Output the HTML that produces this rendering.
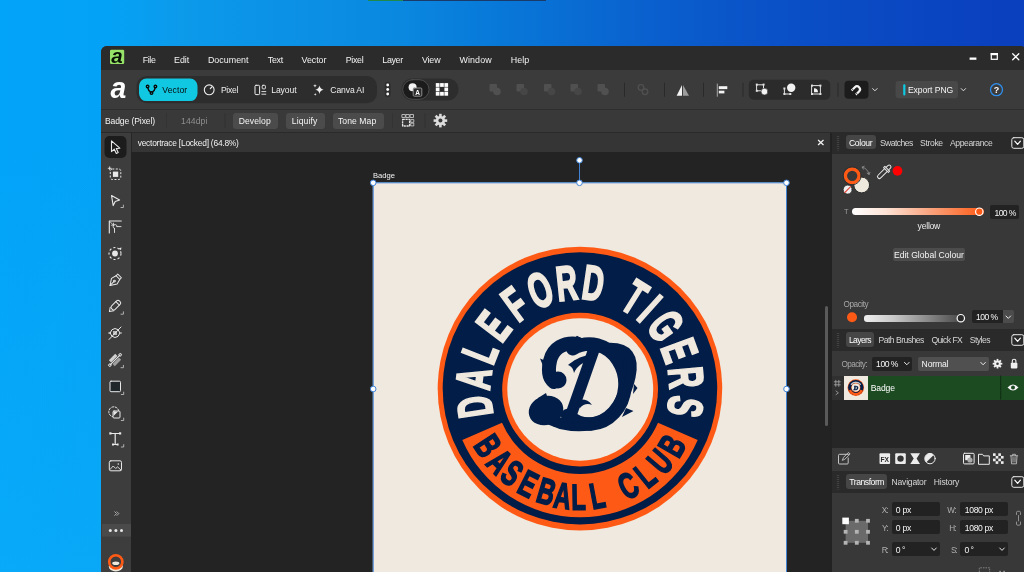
<!DOCTYPE html>
<html><head><meta charset="utf-8"><title>vectortrace</title>
<style>
*{box-sizing:border-box;margin:0;padding:0}
html,body{width:1024px;height:572px;overflow:hidden}
body{position:relative;font-family:"Liberation Sans",sans-serif;font-size:9px;color:#e6e6e6;
background:linear-gradient(180deg,rgba(30,190,250,0) 0px,rgba(30,190,250,0) 150px,rgba(30,190,250,0.22) 572px),linear-gradient(90deg,#02a4f9 0px,#04a2f6 110px,#0c9aeb 180px,#0a88e0 400px,#0878d8 500px,#0a60ce 650px,#0a50c6 780px,#0a40be 1000px);}
.abs{position:absolute}
#win{position:absolute;left:101px;top:46px;width:926.6px;height:540px;background:#383838;border-radius:6px 8px 0 0;overflow:hidden}
#menubar{position:absolute;left:0;top:0;width:100%;height:24px;background:#2b2b2b}
#menubar span{position:absolute;top:9px;font-size:8.9px;color:#f0f0f0;white-space:nowrap}
#toolbar{position:absolute;left:0;top:24px;width:100%;height:40px;background:#3b3b3b;border-bottom:1px solid #2e2e2e}
#ctx{position:absolute;left:0;top:64px;width:100%;height:22px;background:#393939}
#ctxline{position:absolute;left:0;top:86px;width:100%;height:1px;background:#2a2a2a}
#tools{position:absolute;left:0;top:87px;width:30px;height:460px;background:#3d3d3d}
#doctab{position:absolute;left:31px;top:87px;width:698px;height:19px;background:#353535}
#canvas{position:absolute;left:30px;top:106px;width:701px;height:440px;background:#232323;overflow:hidden}
#gap{position:absolute;left:729px;top:87px;width:2px;height:460px;background:#222}
#panel{position:absolute;left:731px;top:87px;width:200px;height:460px;background:#383838}
.btn{position:absolute;background:#4a4a4a;border-radius:3px;color:#f2f2f2;text-align:center;white-space:nowrap}
.t{position:absolute;white-space:nowrap}
#txt,#panel,svg{will-change:transform}
.ic{position:absolute;overflow:visible}
.hdr{position:absolute;left:0;width:200px;background:#2b2b2b}
.tabsel{position:absolute;background:#464646;border-radius:3px}
.fld{position:absolute;background:#222;border-radius:2px;color:#f4f4f4;white-space:nowrap}
</style></head><body>
<div class="abs" style="left:368px;top:0;width:35px;height:1px;background:#1f8a4c"></div>
<div class="abs" style="left:403px;top:0;width:143px;height:1px;background:#1a3a6a"></div>
<div id="win">
 <div id="menubar"></div>
 <div id="toolbar"></div>
 <div id="ctx"></div>
 <div id="ctxline"></div>
 <div id="tools"></div>
 <div class="abs" style="left:30px;top:87px;width:1px;height:460px;background:#262626"></div>
 <div id="doctab"></div>
 <div id="canvas">
<svg class="abs" style="left:-131px;top:-152px" width="1024" height="572" viewBox="0 0 1024 572">
 <rect x="372.800" y="182.400" width="413.400" height="400" fill="#f0e9df"/>
 <ellipse cx="579.95" cy="388.7" rx="142.25" ry="141.9" fill="#fe5a15"/>
 <ellipse cx="579.95" cy="388.4" rx="137.25" ry="136.05" fill="#021d47"/>
 <ellipse cx="580.1" cy="389.6" rx="77.9" ry="76.9" fill="#fe5a15"/>
 <ellipse cx="580.25" cy="389.45" rx="72.95" ry="71.25" fill="#f0e9df"/>
 <path d="M462.3,439.9 A128.2,128.2 0 0 0 697.7,439.9 L658.0,422.8 A85,85 0 0 1 502.0,422.8 Z" fill="#fe5a15"/>
 <defs><path id="arcT" d="M502.2,433.9 A89.8,89.8 0 1 1 657.8,433.9"/><path id="arcB" d="M460.5,405.8 A120.7,120.7 0 0 0 699.5,405.8"/></defs>
 <text id="txT" font-family="Liberation Sans, sans-serif" font-weight="bold" font-size="48.8" fill="#f0e9df" stroke="#f0e9df" stroke-width="2.2" letter-spacing="7" textLength="336.2" lengthAdjust="spacingAndGlyphs"><textPath href="#arcT" textLength="336.2" lengthAdjust="spacingAndGlyphs"><tspan dx="21.10 -2.41 -1.01 3.22 5.31 -0.53 -4.82 -4.63 1.01 1.01 -2.26 0.24 -2.20 -1.57 0.24">DALEFORD TIGERS</tspan></textPath></text>
 <text id="txB" font-family="Liberation Sans, sans-serif" font-weight="bold" font-size="36.200" fill="#021d47" stroke="#021d47" stroke-width="1.7" letter-spacing="9" textLength="267.9" lengthAdjust="spacingAndGlyphs"><textPath href="#arcB" textLength="267.9" lengthAdjust="spacingAndGlyphs"><tspan dx="41.52 -1.49 -5.31 -0.13 -0.49 -6.88 -5.63 1.00 1.84 1.84 1.18 1.18 -1.79">BASEBALL CLUB</tspan></textPath></text>
 <g fill="none" stroke="#021d47" stroke-linecap="round" stroke-linejoin="round">
  <path d="M572.8,348.7 A35.5,40 0 1 1 567.6,415.5" stroke-width="13.500"/>
  <path d="M578,344 C564,342 553,348 550,361 C548,370 549,378 554,382" stroke-width="14"/>
  <path d="M545,416 C556,424 572,427 590,425" stroke-width="11"/>
 </g>
 <g fill="#021d47">
  <ellipse cx="546" cy="410.500" rx="17.500" ry="14.500" transform="rotate(-18 546 410.500)"/>
  <circle cx="558" cy="380" r="8.500"/>
  <path d="M589,361 C583,362 577,366 574,373 C573,368 571,366 568,365 C573,361 580,356 590,355 Z"/>
  <path d="M574,402 C580,398 588,399 592,405 C588,403 583,404 580,408 Z"/>
  <path d="M573,339.500 L577,335.800 L583,339 Z M631,364 L636,360 L634.500,371 Z M626,408 L633.500,411 L622,417 Z M546,361 L540,358.500 L543.500,367 Z M538,398 L546,393 L548,399 Z M634,384 L637.500,388 L633,394 Z"/>
 </g>
 <text x="0" y="0" transform="translate(556,425) skewX(-12) scale(0.800,1.020)" font-family="Liberation Serif, serif" font-weight="normal" font-style="italic" font-size="120" fill="#021d47" stroke="#021d47" stroke-width="4" stroke-linejoin="round">D</text>
 <rect x="373.200" y="182.800" width="413.300" height="400" fill="none" stroke="#3f82d6" stroke-width="1"/>
 <line x1="579.5" y1="160" x2="579.5" y2="183" stroke="#3f82d6" stroke-width="1"/>
 <g fill="#fff" stroke="#3f82d6" stroke-width="1">
  <circle cx="373.200" cy="182.800" r="2.800"/><circle cx="579.500" cy="182.800" r="2.800"/><circle cx="786.500" cy="182.800" r="2.800"/>
  <circle cx="579.500" cy="160.300" r="2.800"/><circle cx="373.200" cy="389" r="2.800"/><circle cx="786.500" cy="389" r="2.800"/>
 </g>
 <text x="373" y="177.700" font-family="Liberation Sans, sans-serif" font-size="7.600" fill="#f2f2f2">Badge</text>
</svg>
 </div>
 <div id="gap"></div>
 <div id="panel">
<div class="abs" style="left:0.0px;top:-0.5px;width:200.0px;height:21.0px;background:#2a2a2a;"></div>
<div class="abs" style="left:0.0px;top:195.8px;width:200.0px;height:21.8px;background:#2a2a2a;"></div>
<div class="abs" style="left:0.0px;top:338.3px;width:200.0px;height:21.7px;background:#2a2a2a;"></div>
<div class="abs" style="left:13.5px;top:1.8px;width:30.4px;height:14.7px;background:#464646;border-radius:3px"></div>
<span class="t" style="left:17.00px;top:5.62px;font-size:8.6px;line-height:1;letter-spacing:-0.339px;color:#ffffff;">Colour</span>
<span class="t" style="left:47.90px;top:5.62px;font-size:8.6px;line-height:1;letter-spacing:-0.548px;color:#d6d6d6;">Swatches</span>
<span class="t" style="left:88.00px;top:5.62px;font-size:8.6px;line-height:1;letter-spacing:-0.343px;color:#d6d6d6;">Stroke</span>
<span class="t" style="left:118.00px;top:5.62px;font-size:8.6px;line-height:1;letter-spacing:-0.398px;color:#d6d6d6;">Appearance</span>
<span class="t" style="left:12.00px;top:75.45px;font-size:7.5px;line-height:1;letter-spacing:-0.981px;color:#9a9a9a;">T</span>
<div class="abs" style="left:19.7px;top:75.2px;width:132.0px;height:7.0px;background:linear-gradient(90deg,#ffffff 0%,#fde3d6 25%,#f9a27c 60%,#fe5a15 100%);border-radius:3.5px"></div>
<div class="abs" style="left:158.0px;top:72.4px;width:29.2px;height:13.5px;background:#222;border-radius:2px"></div>
<span class="t" style="left:162.50px;top:75.72px;font-size:8.6px;line-height:1;letter-spacing:-0.637px;color:#f6f6f6;">100 %</span>
<span class="t" style="left:85.60px;top:89.02px;font-size:8.6px;line-height:1;letter-spacing:-0.233px;color:#ededed;">yellow</span>
<div class="abs" style="left:60.5px;top:114.6px;width:72.7px;height:13.5px;background:#4c4c4c;border-radius:2px"></div>
<span class="t" style="left:61.90px;top:117.52px;font-size:8.6px;line-height:1;letter-spacing:0.017px;color:#f6f6f6;">Edit Global Colour</span>
<span class="t" style="left:11.60px;top:168.46px;font-size:8.2px;line-height:1;letter-spacing:-0.457px;color:#a8a8a8;">Opacity</span>
<div class="abs" style="left:31.9px;top:182.0px;width:98.0px;height:6.5px;background:linear-gradient(90deg,#efefef 0%,#c8c8c8 30%,#8a8a8a 65%,#474747 100%);border-radius:3.2px"></div>
<div class="abs" style="left:140.0px;top:177.4px;width:31.2px;height:12.8px;background:#222;border-radius:2px 0 0 2px"></div>
<span class="t" style="left:144.00px;top:179.92px;font-size:8.6px;line-height:1;letter-spacing:-0.557px;color:#f6f6f6;">100 %</span>
<div class="abs" style="left:171.2px;top:177.4px;width:11.1px;height:12.8px;background:#4c4c4c;border-radius:0 2px 2px 0"></div>
<div class="abs" style="left:14.0px;top:199.1px;width:28.2px;height:14.7px;background:#464646;border-radius:3px"></div>
<span class="t" style="left:16.90px;top:202.92px;font-size:8.6px;line-height:1;letter-spacing:-0.619px;color:#ffffff;">Layers</span>
<span class="t" style="left:46.50px;top:202.92px;font-size:8.6px;line-height:1;letter-spacing:-0.519px;color:#d6d6d6;">Path Brushes</span>
<span class="t" style="left:99.40px;top:202.92px;font-size:8.6px;line-height:1;letter-spacing:-0.558px;color:#d6d6d6;">Quick FX</span>
<span class="t" style="left:137.80px;top:202.92px;font-size:8.6px;line-height:1;letter-spacing:-0.553px;color:#d6d6d6;">Styles</span>
<span class="t" style="left:9.40px;top:227.66px;font-size:8.2px;line-height:1;letter-spacing:-0.547px;color:#a8a8a8;">Opacity:</span>
<div class="abs" style="left:39.9px;top:223.5px;width:40.4px;height:14.3px;background:#222;border-radius:2px"></div>
<span class="t" style="left:44.10px;top:226.62px;font-size:8.6px;line-height:1;letter-spacing:-0.497px;color:#f6f6f6;">100 %</span>
<div class="abs" style="left:86.3px;top:223.5px;width:70.8px;height:14.3px;background:#505050;border-radius:2px"></div>
<span class="t" style="left:89.60px;top:226.62px;font-size:8.6px;line-height:1;letter-spacing:-0.169px;color:#f6f6f6;">Normal</span>
<div class="abs" style="left:0.0px;top:242.8px;width:200.0px;height:23.8px;background:#1c4a21;"></div>
<div class="abs" style="left:0.0px;top:242.8px;width:11.8px;height:23.8px;background:#303030;"></div>
<div class="abs" style="left:11.8px;top:242.8px;width:23.8px;height:23.8px;background:#f0e9df;"></div>
<span class="t" style="left:38.80px;top:250.92px;font-size:8.6px;line-height:1;letter-spacing:-0.174px;color:#ffffff;">Badge</span>
<div class="abs" style="left:0.0px;top:266.6px;width:200.0px;height:48.6px;background:#262626;"></div>
<div class="abs" style="left:14.0px;top:341.1px;width:41.3px;height:14.7px;background:#464646;border-radius:3px"></div>
<span class="t" style="left:17.30px;top:345.22px;font-size:8.6px;line-height:1;letter-spacing:-0.452px;color:#ffffff;">Transform</span>
<span class="t" style="left:59.60px;top:345.22px;font-size:8.6px;line-height:1;letter-spacing:-0.234px;color:#d6d6d6;">Navigator</span>
<span class="t" style="left:101.80px;top:345.22px;font-size:8.6px;line-height:1;letter-spacing:-0.208px;color:#d6d6d6;">History</span>
<span class="t" style="left:49.70px;top:373.86px;font-size:8.2px;line-height:1;letter-spacing:-0.774px;color:#aeaeae;">X:</span>
<div class="abs" style="left:60.0px;top:369.3px;width:47.5px;height:13.6px;background:#222;border-radius:2px"></div>
<span class="t" style="left:63.80px;top:372.72px;font-size:8.6px;line-height:1;letter-spacing:-0.239px;color:#f6f6f6;">0 px</span>
<span class="t" style="left:50.00px;top:391.86px;font-size:8.2px;line-height:1;letter-spacing:-0.698px;color:#aeaeae;">Y:</span>
<div class="abs" style="left:60.0px;top:387.3px;width:47.5px;height:13.6px;background:#222;border-radius:2px"></div>
<span class="t" style="left:63.80px;top:390.72px;font-size:8.6px;line-height:1;letter-spacing:-0.239px;color:#f6f6f6;">0 px</span>
<span class="t" style="left:49.70px;top:413.96px;font-size:8.2px;line-height:1;letter-spacing:-1.000px;color:#aeaeae;">R:</span>
<div class="abs" style="left:60.0px;top:409.4px;width:47.5px;height:13.6px;background:#222;border-radius:2px"></div>
<span class="t" style="left:63.80px;top:412.82px;font-size:8.6px;line-height:1;letter-spacing:-0.437px;color:#f6f6f6;">0 °</span>
<span class="t" style="left:115.30px;top:373.86px;font-size:8.2px;line-height:1;letter-spacing:-0.535px;color:#aeaeae;">W:</span>
<div class="abs" style="left:128.4px;top:369.3px;width:47.5px;height:13.6px;background:#222;border-radius:2px"></div>
<span class="t" style="left:132.80px;top:372.72px;font-size:8.6px;line-height:1;letter-spacing:-0.358px;color:#f6f6f6;">1080 px</span>
<span class="t" style="left:117.20px;top:391.86px;font-size:8.2px;line-height:1;letter-spacing:-0.650px;color:#aeaeae;">H:</span>
<div class="abs" style="left:128.4px;top:387.3px;width:47.5px;height:13.6px;background:#222;border-radius:2px"></div>
<span class="t" style="left:132.80px;top:390.72px;font-size:8.6px;line-height:1;letter-spacing:-0.358px;color:#f6f6f6;">1080 px</span>
<span class="t" style="left:119.00px;top:413.96px;font-size:8.2px;line-height:1;letter-spacing:-1.324px;color:#aeaeae;">S:</span>
<div class="abs" style="left:128.4px;top:409.4px;width:47.5px;height:13.6px;background:#222;border-radius:2px"></div>
<span class="t" style="left:132.40px;top:412.82px;font-size:8.6px;line-height:1;letter-spacing:-0.471px;color:#f6f6f6;">0 °</span>
 </div>
</div>
<svg class="abs" style="left:0;top:0" width="1024" height="572" viewBox="0 0 1024 572" fill="none" stroke-linecap="round" stroke-linejoin="round">
<rect x="110" y="49.800" width="14.200" height="14.200" rx="1.200" fill="#96e269"/>
<text x="117" y="62.900" text-anchor="middle" font-family="Liberation Sans, sans-serif" font-weight="bold" font-style="italic" font-size="20.500" fill="#071004">a</text>
<text x="118.3" y="97.600" text-anchor="middle" font-family="Liberation Sans, sans-serif" font-weight="bold" font-style="italic" font-size="29" fill="#ffffff" textLength="15.800" lengthAdjust="spacingAndGlyphs">a</text>
<rect x="136.500" y="76" width="240.500" height="27.300" rx="10" fill="#2d2d2d"/>
<rect x="139" y="78.600" width="58.500" height="22.500" rx="7.500" fill="#10c8e2"/>
<g stroke="#0a0a0a" stroke-width="1.350"><circle cx="147.600" cy="86.500" r="1.300"/><circle cx="155.400" cy="86.500" r="1.300"/><circle cx="151.500" cy="93" r="1.300"/><path d="M147.900,88 C148.300,90 149.500,91.700 150.600,92.200 M155.100,88 C154.700,90 153.500,91.700 152.400,92.200"/></g>
<circle cx="209.200" cy="89.800" r="4.900" stroke="#efefef" stroke-width="1.100"/><path d="M210.300,88.600 L211.800,87" stroke="#efefef" stroke-width="1.100"/>
<rect x="255" y="85.300" width="4.600" height="9.300" rx="1" stroke="#efefef" stroke-width="1"/><rect x="262.200" y="85.300" width="3.200" height="3.600" rx="0.800" stroke="#efefef" stroke-width="0.900"/><path d="M261.800,91.600h4M261.800,94.200h4" stroke="#efefef" stroke-width="0.900"/>
<path d="M319.500,85.500 q0.600,3.600 4.200,4.200 q-3.600,0.600 -4.200,4.200 q-0.600,-3.600 -4.200,-4.200 q3.600,-0.600 4.200,-4.200z" fill="#efefef"/><path d="M315,84 l0.500,1.300 l1.300,0.500 l-1.300,0.500 l-0.500,1.300 l-0.500,-1.300 l-1.300,-0.500 l1.300,-0.500z M315.200,93 l0.400,1 l1,0.400 l-1,0.400 l-0.400,1 l-0.400,-1 l-1,-0.400 l1,-0.400z" fill="#efefef"/>
<rect x="384.800" y="81.800" width="5.800" height="15.400" rx="2.900" fill="#2e2e2e"/>
<g fill="#ffffff"><circle cx="387.700" cy="85" r="1.400"/><circle cx="387.700" cy="89.500" r="1.400"/><circle cx="387.700" cy="94" r="1.400"/></g>
<rect x="401.500" y="78.400" width="57" height="22" rx="11" fill="#2d2d2d"/>
<rect x="402.700" y="79.700" width="26.300" height="19.600" rx="9.800" fill="#1b1b1b" stroke="#565656" stroke-width="0.800"/>
<circle cx="412.600" cy="87.200" r="4" fill="#f2f2f2"/><rect x="413.200" y="88" width="8.600" height="8.200" rx="1" fill="#2a2a2a" stroke="#9a9a9a" stroke-width="0.900"/>
<text x="417.500" y="95" text-anchor="middle" font-family="Liberation Sans, sans-serif" font-weight="bold" font-size="6.500" fill="#fff">A</text>
<g fill="#ffffff"><rect x="435.8" y="83.1" width="3.700" height="3.800"/><rect x="440.1" y="83.1" width="3.700" height="3.800"/><rect x="444.4" y="83.1" width="3.700" height="3.800"/><rect x="435.8" y="87.5" width="3.700" height="3.800"/><rect x="444.4" y="87.5" width="3.700" height="3.800"/><rect x="435.8" y="91.9" width="3.700" height="3.800"/><rect x="440.1" y="91.9" width="3.700" height="3.800"/><rect x="444.4" y="91.9" width="3.700" height="3.800"/></g>
<rect x="489.5" y="84" width="7.500" height="7.500" rx="1" fill="#505050"/><circle cx="497" cy="91.500" r="3.800" fill="#505050"/>
<rect x="516.5" y="84" width="7.500" height="7.500" rx="1" fill="#505050"/><circle cx="524" cy="91.500" r="3.800" fill="#464646"/>
<rect x="544.0" y="84" width="7.500" height="7.500" rx="1" fill="#505050"/><circle cx="551.5" cy="91.500" r="3.800" fill="#464646"/>
<rect x="570.5" y="84" width="7.500" height="7.500" rx="1" fill="#505050"/><circle cx="578" cy="91.500" r="3.800" fill="#464646"/>
<rect x="597.5" y="84" width="7.500" height="7.500" rx="1" fill="#505050"/><circle cx="605" cy="91.500" r="3.800" fill="#505050"/>
<g stroke="#505050" stroke-width="1.300"><circle cx="641" cy="87.500" r="2.800"/><circle cx="645" cy="91.800" r="2.800"/></g>
<path d="M624.5,83 V96.300" stroke="#2a2a2a" stroke-width="1"/>
<path d="M664.5,83 V96.300" stroke="#2a2a2a" stroke-width="1"/>
<path d="M703.5,83 V96.300" stroke="#2a2a2a" stroke-width="1"/>
<path d="M743,83 V96.300" stroke="#2a2a2a" stroke-width="1"/>
<path d="M838,83 V96.300" stroke="#2a2a2a" stroke-width="1"/>
<path d="M682,85 V95.800 H676.600 Z" fill="#f4f4f4"/><path d="M683,85 V95.800 H689 Z" fill="#9c9c9c"/>
<path d="M717.300,84 V96.300" stroke="#a8a8a8" stroke-width="1"/><rect x="718.800" y="86.200" width="8.500" height="2.900" fill="#f4f4f4"/><rect x="718.800" y="90.700" width="5.600" height="2.700" fill="#f4f4f4"/>
<rect x="748.800" y="79.700" width="81.400" height="20" rx="5" fill="#2b2b2b"/>
<rect x="757" y="84.800" width="6.500" height="6" stroke="#e0e0e0" stroke-width="1"/><circle cx="764.500" cy="91.600" r="3.400" fill="#f2f2f2" stroke="#2b2b2b" stroke-width="0.600"/>
<g fill="#e0e0e0"><rect x="755.800" y="83.600" width="2" height="2"/><rect x="762.600" y="83.600" width="2" height="2"/><rect x="755.800" y="89.800" width="2" height="2"/></g>
<circle cx="791.200" cy="87.800" r="4.200" fill="#f2f2f2"/><path d="M784.400,89 V94 H790" stroke="#e0e0e0" stroke-width="1"/><g fill="#e0e0e0"><rect x="783.400" y="87.500" width="2" height="2"/><rect x="783.400" y="93" width="2" height="2"/><rect x="789.300" y="93" width="2" height="2"/></g>
<rect x="812" y="85.600" width="8.400" height="8.400" stroke="#e0e0e0" stroke-width="1"/><path d="M814,92.200 V88.200 a4,4 0 0 1 4,4 z" fill="#f2f2f2"/><g fill="#e0e0e0"><rect x="811" y="84.600" width="2" height="2"/><rect x="819.400" y="84.600" width="2" height="2"/><rect x="811" y="93" width="2" height="2"/><rect x="819.400" y="93" width="2" height="2"/></g>
<rect x="844.500" y="80.700" width="24" height="18" rx="4" fill="#1c1c1c"/>
<g transform="translate(856.600,89.700) rotate(45)"><path d="M-3,4 V-0.500 a3,3 0 0 1 6,0 V4" stroke="#f4f4f4" stroke-width="2.200" stroke-linecap="butt"/><path d="M-4.100,2.600h2.200M1.900,2.600h2.200" stroke="#1c1c1c" stroke-width="0.700"/></g>
<path d="M872.700,88.600 l2.200,2.200 l2.200,-2.200" stroke="#e0e0e0" stroke-width="1"/>
<rect x="895.600" y="81" width="62.400" height="17.200" rx="3" fill="#484848"/><rect x="903.200" y="84.200" width="2.200" height="11.200" rx="1" fill="#10c8e2"/>
<path d="M961.200,88.600 l2.200,2.200 l2.200,-2.200" stroke="#e0e0e0" stroke-width="1"/>
<circle cx="996.500" cy="89.700" r="6" stroke="#2f8fee" stroke-width="1.300"/>
<text x="996.500" y="93" text-anchor="middle" font-family="Liberation Sans, sans-serif" font-weight="bold" font-size="9" fill="#fff">?</text>
<rect x="969.600" y="57.500" width="6.800" height="2.300" fill="#fff"/>
<rect x="991.300" y="53.600" width="6" height="5.700" stroke="#fff" stroke-width="1.200" stroke-linejoin="miter"/><rect x="990.700" y="53" width="7.200" height="2.200" fill="#fff"/>
<path d="M1012.700,53.700 l6.100,6.100 M1018.800,53.700 l-6.100,6.100" stroke="#fff" stroke-width="1.300"/>
<path d="M166.5,113.500 V128" stroke="#2e2e2e" stroke-width="1" stroke-dasharray="1 1" stroke-linecap="butt"/>
<path d="M225,113.500 V128" stroke="#2e2e2e" stroke-width="1" stroke-dasharray="1 1" stroke-linecap="butt"/>
<path d="M392.5,113.500 V128" stroke="#2e2e2e" stroke-width="1" stroke-dasharray="1 1" stroke-linecap="butt"/>
<path d="M425,113.500 V128" stroke="#2e2e2e" stroke-width="1" stroke-dasharray="1 1" stroke-linecap="butt"/>
<rect x="402.600" y="119.400" width="7" height="6.600" stroke="#e6e6e6" stroke-width="1.300" stroke-dasharray="2.200 0.700" stroke-linecap="butt"/>
<g stroke="#d4d4d4" stroke-width="0.800"><rect x="402.3" y="114.500" width="3" height="3"/><rect x="406.3" y="114.500" width="3" height="3"/><rect x="410.5" y="114.500" width="3" height="3"/><rect x="411.100" y="119.6" width="2.700" height="2.700"/><rect x="411.100" y="123.2" width="2.700" height="2.700"/></g>
<g transform="translate(440.400,120.600)" fill="#dcdcdc"><rect x="-1.300" y="-6.800" width="2.600" height="3.400" transform="rotate(0)"/><rect x="-1.300" y="-6.800" width="2.600" height="3.400" transform="rotate(45)"/><rect x="-1.300" y="-6.800" width="2.600" height="3.400" transform="rotate(90)"/><rect x="-1.300" y="-6.800" width="2.600" height="3.400" transform="rotate(135)"/><rect x="-1.300" y="-6.800" width="2.600" height="3.400" transform="rotate(180)"/><rect x="-1.300" y="-6.800" width="2.600" height="3.400" transform="rotate(225)"/><rect x="-1.300" y="-6.800" width="2.600" height="3.400" transform="rotate(270)"/><rect x="-1.300" y="-6.800" width="2.600" height="3.400" transform="rotate(315)"/><circle r="4.700"/><circle r="2" fill="#383838"/></g>
</svg>
<svg class="abs" style="left:0;top:0" width="1024" height="572" viewBox="0 0 1024 572" fill="none" stroke-linecap="round" stroke-linejoin="round">
<path d="M818.100,139.900 l5.400,5 M823.500,139.900 l-5.400,5" stroke="#f0f0f0" stroke-width="1.300" stroke-linecap="butt"/>
<rect x="825" y="306" width="3" height="120" rx="1.500" fill="#5a5a5a"/>
<path d="M838,136 V150.5" stroke="#424242" stroke-width="2.400" stroke-dasharray="1 1" stroke-linecap="butt"/>
<rect x="1011.800" y="137.7" width="12" height="10.600" rx="2" stroke="#e8e8e8" stroke-width="1"/><path d="M1014.800,141.2 l2.800,3.200 l2.800,-3.200" stroke="#fff" stroke-width="1.200"/>
<path d="M838,333 V347.5" stroke="#424242" stroke-width="2.400" stroke-dasharray="1 1" stroke-linecap="butt"/>
<rect x="1011.800" y="334.7" width="12" height="10.600" rx="2" stroke="#e8e8e8" stroke-width="1"/><path d="M1014.800,338.2 l2.800,3.200 l2.800,-3.200" stroke="#fff" stroke-width="1.200"/>
<path d="M838,475 V489.5" stroke="#424242" stroke-width="2.400" stroke-dasharray="1 1" stroke-linecap="butt"/>
<rect x="1011.800" y="476.7" width="12" height="10.600" rx="2" stroke="#e8e8e8" stroke-width="1"/><path d="M1014.800,480.2 l2.800,3.200 l2.800,-3.200" stroke="#fff" stroke-width="1.200"/>
<circle cx="861.700" cy="185" r="7.900" fill="#efe8dc" stroke="#2c2c2c" stroke-width="1"/>
<circle cx="852.200" cy="175.800" r="6.850" fill="#383838" stroke="#fe5a15" stroke-width="3.400"/>
<circle cx="852.200" cy="175.800" r="9" stroke="#2e2e2e" stroke-width="0.900"/>
<circle cx="847.700" cy="189.600" r="4.500" fill="#f0f0f2" stroke="#2c2c2c" stroke-width="0.800"/><path d="M844.800,192.500 l5.800,-5.800" stroke="#e4483a" stroke-width="1.100"/>
<path d="M862.300,167.200 Q867.500,168.300 869,174.200 M862.300,167.200 l1.900,-0.900 M862.300,167.200 l1,1.900 M869,174.200 l-1.900,-1 M869,174.200 l1,-1.900" stroke="#8e8e8e" stroke-width="0.900"/>
<g transform="translate(884,172) rotate(45)" stroke="#e6e6e6" stroke-width="1"><path d="M-1.800,-4.600 V-7.300 a1.800,1.800 0 0 1 3.600,0 V-4.600"/><path d="M-3.400,-4.600 H3.400 V-2.800 H-3.400 Z"/><path d="M-1.900,-2.800 V6.500 a1.900,1.900 0 0 0 3.800,0 V-2.800"/></g>
<circle cx="897.500" cy="170.900" r="4.850" fill="#fe0000"/>
<circle cx="979.300" cy="211.700" r="3.700" fill="#fe5a15" stroke="#ffffff" stroke-width="1.200"/>
<circle cx="852" cy="317.200" r="5" fill="#fe5a15"/>
<circle cx="960.800" cy="318.200" r="3.700" fill="#2c2c2c" stroke="#ffffff" stroke-width="1.200"/>
<path d="M1006,316 l2.300,2.400 l2.300,-2.400" stroke="#e8e8e8" stroke-width="1"/>
<path d="M904.500,362.400 l2.300,2.400 l2.300,-2.400" stroke="#e8e8e8" stroke-width="1"/>
<path d="M980.800,362.400 l2.300,2.400 l2.300,-2.400" stroke="#e8e8e8" stroke-width="1"/>
<g transform="translate(997.500,363.700)" fill="#f0f0f0"><rect x="-0.900" y="-4.800" width="1.800" height="2.400" transform="rotate(0)"/><rect x="-0.900" y="-4.800" width="1.800" height="2.400" transform="rotate(45)"/><rect x="-0.900" y="-4.800" width="1.800" height="2.400" transform="rotate(90)"/><rect x="-0.900" y="-4.800" width="1.800" height="2.400" transform="rotate(135)"/><rect x="-0.900" y="-4.800" width="1.800" height="2.400" transform="rotate(180)"/><rect x="-0.900" y="-4.800" width="1.800" height="2.400" transform="rotate(225)"/><rect x="-0.900" y="-4.800" width="1.800" height="2.400" transform="rotate(270)"/><rect x="-0.900" y="-4.800" width="1.800" height="2.400" transform="rotate(315)"/><circle r="3.300"/><circle r="1.300" fill="#383838"/></g>
<rect x="1010.800" y="362.800" width="6.600" height="5.600" rx="0.800" fill="#f0f0f0"/><path d="M1012.300,362.800 v-1.800 a1.800,1.800 0 0 1 3.600,0 v1.800" stroke="#f0f0f0" stroke-width="1.100"/>
<path d="M835.800,380.300 v6 M838.800,380.300 v6 M834.300,381.800 h6 M834.300,384.800 h6" stroke="#a8a8a8" stroke-width="0.800"/>
<path d="M836,391 l2.400,1.800 l-2.400,1.800" stroke="#a8a8a8" stroke-width="0.800"/>
<circle cx="855.800" cy="387.600" r="8.300" fill="#fe5a15"/><circle cx="855.800" cy="387.600" r="7.700" fill="#021d47"/><circle cx="855.800" cy="387.600" r="4.600" fill="#fe5a15"/><circle cx="855.800" cy="387.600" r="4.100" fill="#f0e9df"/>
<path d="M848.900,390.500 A7.400,7.400 0 0 0 862.700,390.500 L860.600,389.600 A5.100,5.100 0 0 1 851,389.600 Z" fill="#fe5a15"/>
<path d="M851.300,384.400 A5.800,5.800 0 0 1 860.300,384.400" stroke="#c9c6c6" stroke-width="1.300" stroke-dasharray="1 0.500"/>
<text x="855.900" y="389.700" text-anchor="middle" font-family="Liberation Serif, serif" font-weight="bold" font-style="italic" font-size="6.500" fill="#021d47" stroke="#021d47" stroke-width="0.500">D</text>
<path d="M1000.700,376 V399" stroke="#0e2a12" stroke-width="1" stroke-dasharray="1.500 1"/>
<path d="M1007.500,387.600 q5.500,-6 11,0 q-5.500,6 -11,0z" fill="#f4f4f4"/><circle cx="1013" cy="387.600" r="2" fill="#1c4a22"/>
<path d="M848.500,454.300 H839.500 a1,1 0 0 0 -1,1 V463 a1,1 0 0 0 1,1 H847.200 a1,1 0 0 0 1,-1 V458" stroke="#c4c4c4" stroke-width="1"/><path d="M842.500,460 l1,-2.600 l5,-5 l1.600,1.600 l-5,5 z" stroke="#c4c4c4" stroke-width="0.900"/>
<rect x="879.500" y="453.300" width="10.600" height="10.600" rx="1" fill="#ececec"/>
<text x="884.800" y="462" text-anchor="middle" font-family="Liberation Sans, sans-serif" font-weight="bold" font-size="7.500" fill="#2a2a2a" textLength="8.500" lengthAdjust="spacingAndGlyphs">FX</text>
<rect x="895.200" y="453.300" width="10.600" height="10.600" rx="1" fill="#ececec"/><circle cx="900.500" cy="458.600" r="3.200" fill="#333"/>
<path d="M910.300,453.300 H920 L916.600,458.600 L920,463.900 H910.300 L913.700,458.600 Z" fill="#ececec"/>
<circle cx="930" cy="458.600" r="5.200" stroke="#ececec" stroke-width="1"/><path d="M926.300,462.300 A5.200,5.200 0 0 1 933.700,454.900 Z" fill="#ececec"/>
<rect x="963.500" y="453.300" width="10.600" height="10.600" rx="1" stroke="#ececec" stroke-width="1"/><rect x="965.200" y="455" width="5.200" height="5.200" fill="#ececec"/><circle cx="970" cy="460" r="2.600" fill="#aaa"/>
<path d="M978.500,463.900 V454.300 h4 l1.200,1.600 h5.600 V463.900 Z" stroke="#ececec" stroke-width="1"/>
<g fill="#ececec"><rect x="993.00" y="453.30" width="2.650" height="2.650"/><rect x="998.30" y="453.30" width="2.650" height="2.650"/><rect x="995.65" y="455.95" width="2.650" height="2.650"/><rect x="1000.95" y="455.95" width="2.650" height="2.650"/><rect x="993.00" y="458.60" width="2.650" height="2.650"/><rect x="998.30" y="458.60" width="2.650" height="2.650"/><rect x="995.65" y="461.25" width="2.650" height="2.650"/><rect x="1000.95" y="461.25" width="2.650" height="2.650"/></g>
<path d="M1010.300,455.800 h7.400 M1012.600,455.800 v-1.500 h2.800 v1.500 M1011,455.800 l0.500,8 h5 l0.500,-8 M1013,457.500 v4.500 M1015,457.500 v4.500" stroke="#bcbcbc" stroke-width="0.900"/>
<rect x="845.600" y="520.800" width="22.400" height="22" fill="#6a6a6a"/>
<g fill="#b4b4b4"><rect x="854.9" y="518.9" width="3.800" height="3.800"/><rect x="866.1" y="518.9" width="3.800" height="3.800"/><rect x="843.7" y="529.9" width="3.800" height="3.800"/><rect x="854.9" y="529.9" width="3.800" height="3.800"/><rect x="866.1" y="529.9" width="3.800" height="3.800"/><rect x="843.7" y="540.9" width="3.800" height="3.800"/><rect x="854.9" y="540.9" width="3.800" height="3.800"/><rect x="866.1" y="540.9" width="3.800" height="3.800"/></g><rect x="842.300" y="517.600" width="6.600" height="6.600" fill="#ffffff"/>
<path d="M934,507.800 l2.300,2.400 l2.300,-2.400" stroke="none"/>
<path d="M931.7,548 l2.300,2.400 l2.300,-2.400" stroke="#e8e8e8" stroke-width="1"/>
<path d="M999.7,548 l2.300,2.400 l2.300,-2.400" stroke="#e8e8e8" stroke-width="1"/>
<path d="M1016.500,514.500 v-2 a1.200,1.200 0 0 1 1.200,-1.200 h1.600 a1.200,1.200 0 0 1 1.200,1.200 v2 M1016.500,522 v2 a1.200,1.200 0 0 0 1.200,1.200 h1.600 a1.200,1.200 0 0 0 1.200,-1.200 v-2 M1018.500,515.500 v5.500" stroke="#9a9a9a" stroke-width="0.900"/>
<path d="M979.300,572 V567.800 H989.700 V572" stroke="#8a8a8a" stroke-width="0.900" stroke-dasharray="1.600 1" stroke-linecap="butt"/><rect x="999.300" y="570.800" width="1.600" height="1.200" fill="#9a9a9a"/><rect x="1003.300" y="570.800" width="1.600" height="1.200" fill="#9a9a9a"/>
</svg>
<svg class="abs" style="left:0;top:0;pointer-events:none" width="1024" height="572" viewBox="0 0 1024 572" fill="none" stroke-linecap="round" stroke-linejoin="round">
<rect x="104.5" y="136" width="22" height="22" rx="5" fill="#1c1c1c"/>
<path d="M111.5,140.8 L111.5,151.6 L114.3,149.2 L116.3,153.4 L118.2,152.5 L116.3,148.5 L119.8,148.2 Z" stroke="#e8e8e8" stroke-width="1.1"/>
<rect x="110.300" y="169" width="10.500" height="10.500" rx="2" stroke="#e8e8e8" stroke-width="1" stroke-dasharray="2 1.500" stroke-linecap="butt"/>
<rect x="112.900" y="171.600" width="5.300" height="5.300" fill="#e8e8e8"/>
<path d="M108.2,168.3h3M109.7,166.8v3" stroke="#e8e8e8" stroke-width="0.9"/>
<path d="M111.5,195.5 L119.6,200 L115.2,201.6 L113.2,205.6 Z" stroke="#e8e8e8" stroke-width="1.1"/>
<path d="M121,207.5h2.4v-2.4" stroke="#bdbdbd" stroke-width="0.9"/>
<path d="M109.3,233 V221 H121.3" stroke="#e8e8e8" stroke-width="1.1"/>
<path d="M114.5,232.5 V228.5 M114.5,228.5 a2,2 0 1 1 2.6,-1.9 M117.1,226.6 H121" stroke="#e8e8e8" stroke-width="0.9"/>
<path d="M110.5,222.2 l3,3 m0,-2v2h-2" stroke="#e8e8e8" stroke-width="0.8"/>
<circle cx="115" cy="253.5" r="6" stroke="#e8e8e8" stroke-width="1.100" stroke-dasharray="2.200 2.100" stroke-linecap="butt"/>
<circle cx="115" cy="253.5" r="2.9" fill="#e8e8e8"/>
<path d="M118.7,248.2 l2.8,-0.8 l-0.6,2.9 z" fill="#e8e8e8"/>
<g transform="translate(115,280.5) rotate(45)" stroke="#e8e8e8" stroke-width="1"><path d="M-2.6,-6.5h5.2v2.4h-5.2z"/><path d="M-2.6,-4.1 L-4,1 L0,7 L4,1 L2.6,-4.1"/><path d="M0,7V1.6"/><circle cx="0" cy="0.8" r="0.9"/></g>
<g transform="translate(114.8,306.2) rotate(45)" stroke="#e8e8e8" stroke-width="1"><rect x="-2.5" y="-7" width="5" height="11" rx="2"/><path d="M-2.5,4 L0,7.6 L2.5,4"/><path d="M-2.5,-4h5"/></g>
<path d="M121,314.2h2.4v-2.4" stroke="#bdbdbd" stroke-width="0.9"/>
<path d="M110,333 q1.5,-4.5 5,-4.5 q3.5,0 5,4.5 q-1.5,4.5 -5,4.5 q-3.500,0 -5,-4.5z" stroke="#e8e8e8" stroke-width="1"/>
<rect x="113" y="331" width="4" height="4" fill="#bbb"/>
<path d="M109,339.500 L121,327" stroke="#e8e8e8" stroke-width="1"/><path d="M108.6,333h2M119.500,333h2" stroke="#e8e8e8" stroke-width="0.9"/>
<g transform="translate(115,360) rotate(-45)"><rect x="-4.500" y="-4.200" width="9" height="3.200" fill="#d0d0d0" stroke="none"/><rect x="-4.500" y="1" width="9" height="3.200" fill="#a0a0a0" stroke="none"/><path d="M-7,0H7" stroke="#e8e8e8" stroke-width="1"/><circle cx="-7.300" cy="0" r="1.300" stroke="#e8e8e8" stroke-width="0.9"/><circle cx="7.300" cy="0" r="1.300" stroke="#e8e8e8" stroke-width="0.9"/></g>
<path d="M121,367.700h2.400v-2.400" stroke="#bdbdbd" stroke-width="0.9"/>
<rect x="110" y="381.200" width="10.500" height="10.500" rx="1" fill="#20272b" stroke="#e8e8e8" stroke-width="1"/>
<path d="M121.300,394.500h2.400v-2.400" stroke="#bdbdbd" stroke-width="0.9"/>
<circle cx="113.800" cy="411.800" r="5" stroke="#e8e8e8" stroke-width="1" stroke-dasharray="2 1.500"/>
<rect x="113" y="411" width="7" height="7" rx="1" fill="#3d3d3d" stroke="#e8e8e8" stroke-width="1"/><path d="M113.500,411.500h4.500l-4.500,4.500z" fill="#e8e8e8" stroke="none"/>
<path d="M121.300,420.500h2.400v-2.400" stroke="#bdbdbd" stroke-width="0.9"/>
<path d="M110.500,433.500H120M115.200,433.500V444.500M113.200,444.500h4" stroke="#e8e8e8" stroke-width="1.200"/>
<g fill="#e8e8e8" stroke="none"><rect x="109.300" y="432.300" width="2.200" height="2.200"/><rect x="119" y="432.300" width="2.200" height="2.200"/><rect x="112" y="443.500" width="2" height="2"/><rect x="116.600" y="443.500" width="2" height="2"/></g>
<path d="M121.300,447h2.400v-2.400" stroke="#bdbdbd" stroke-width="0.9"/>
<rect x="109.300" y="460.800" width="12.200" height="10" rx="1.500" stroke="#e8e8e8" stroke-width="1"/><path d="M110,469.500 l3.200,-3.500 l2.500,2.500 l1.800,-1.600 l3.400,3" stroke="#e8e8e8" stroke-width="0.9"/><circle cx="118.300" cy="464" r="0.800" fill="#e8e8e8"/>
<path d="M114.800,511.800 l1.800,1.800 l-1.800,1.800 M117,511.800 l1.800,1.800 l-1.800,1.800" stroke="#c8c8c8" stroke-width="0.800"/>
<rect x="102" y="524" width="29" height="12.600" fill="#4a4a4a"/>
<g fill="#e8e8e8" stroke="none"><circle cx="110.300" cy="530.600" r="1.500"/><circle cx="115.900" cy="530.600" r="1.500"/><circle cx="121.500" cy="530.600" r="1.500"/></g>
<ellipse cx="115.800" cy="566.500" rx="7" ry="5" fill="#efe8dc"/>
<circle cx="115.800" cy="561.800" r="6.600" fill="#3d3d3d" stroke="#fe5a15" stroke-width="2.600"/>
<ellipse cx="115.800" cy="563.300" rx="3.600" ry="1.800" fill="#efe8dc"/>
</svg>
<div id="txt">
<span class="t" style="left:142.80px;top:55.57px;font-size:8.9px;line-height:1;letter-spacing:-0.410px;color:#f2f2f2;">File</span>
<span class="t" style="left:174.10px;top:55.57px;font-size:8.9px;line-height:1;letter-spacing:-0.084px;color:#f2f2f2;">Edit</span>
<span class="t" style="left:207.90px;top:55.57px;font-size:8.9px;line-height:1;letter-spacing:0.030px;color:#f2f2f2;">Document</span>
<span class="t" style="left:267.80px;top:55.57px;font-size:8.9px;line-height:1;letter-spacing:-0.306px;color:#f2f2f2;">Text</span>
<span class="t" style="left:301.60px;top:55.57px;font-size:8.9px;line-height:1;letter-spacing:-0.072px;color:#f2f2f2;">Vector</span>
<span class="t" style="left:345.80px;top:55.57px;font-size:8.9px;line-height:1;letter-spacing:-0.358px;color:#f2f2f2;">Pixel</span>
<span class="t" style="left:382.30px;top:55.57px;font-size:8.9px;line-height:1;letter-spacing:-0.353px;color:#f2f2f2;">Layer</span>
<span class="t" style="left:421.90px;top:55.57px;font-size:8.9px;line-height:1;letter-spacing:-0.133px;color:#f2f2f2;">View</span>
<span class="t" style="left:459.40px;top:55.57px;font-size:8.9px;line-height:1;letter-spacing:0.141px;color:#f2f2f2;">Window</span>
<span class="t" style="left:510.80px;top:55.57px;font-size:8.9px;line-height:1;letter-spacing:0.074px;color:#f2f2f2;">Help</span>
<span class="t" style="left:162.30px;top:85.52px;font-size:8.6px;line-height:1;letter-spacing:0.103px;color:#0a0a0a;">Vector</span>
<span class="t" style="left:220.90px;top:85.52px;font-size:8.6px;line-height:1;letter-spacing:-0.308px;color:#ededed;">Pixel</span>
<span class="t" style="left:271.20px;top:85.52px;font-size:8.6px;line-height:1;letter-spacing:-0.070px;color:#ededed;">Layout</span>
<span class="t" style="left:330.30px;top:85.52px;font-size:8.6px;line-height:1;letter-spacing:-0.113px;color:#ededed;">Canva AI</span>
<span class="t" style="left:907.90px;top:85.72px;font-size:8.6px;line-height:1;letter-spacing:-0.058px;color:#f6f6f6;">Export PNG</span>
<span class="t" style="left:104.90px;top:116.92px;font-size:8.6px;line-height:1;letter-spacing:-0.110px;color:#f2f2f2;">Badge (Pixel)</span>
<span class="t" style="left:181.00px;top:116.92px;font-size:8.6px;line-height:1;letter-spacing:0.096px;color:#8e8e8e;">144dpi</span>
<div class="abs" style="left:232.8px;top:113px;width:44.9px;height:15.5px;background:#4b4b4b;border-radius:3px"></div>
<span class="t" style="left:238.70px;top:116.92px;font-size:8.6px;line-height:1;letter-spacing:0.092px;color:#f4f4f4;">Develop</span>
<div class="abs" style="left:286px;top:113px;width:38.5px;height:15.5px;background:#4b4b4b;border-radius:3px"></div>
<span class="t" style="left:291.80px;top:116.92px;font-size:8.6px;line-height:1;letter-spacing:0.120px;color:#f4f4f4;">Liquify</span>
<div class="abs" style="left:332.5px;top:113px;width:51.2px;height:15.5px;background:#4b4b4b;border-radius:3px"></div>
<span class="t" style="left:338.00px;top:116.92px;font-size:8.6px;line-height:1;letter-spacing:0.066px;color:#f4f4f4;">Tone Map</span>
<span class="t" style="left:137.70px;top:138.89px;font-size:8.4px;line-height:1;letter-spacing:-0.217px;color:#f2f2f2;">vectortrace [Locked] (64.8%)</span>
</div>
</body></html>
